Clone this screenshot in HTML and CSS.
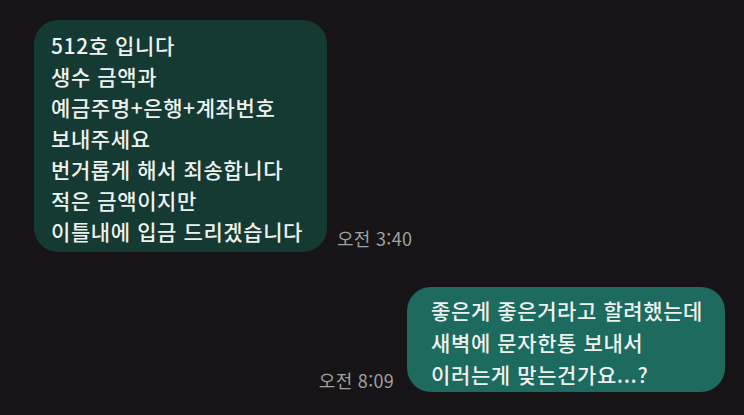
FILE: index.html
```html
<!DOCTYPE html>
<html lang="ko">
<head>
<meta charset="utf-8">
<link rel="stylesheet" href="styles.css">
</head>
<body>
<main class="chat">
  <div class="row row-in">
    <div class="bubble bubble-in">
      <p class="line">512호 입니다</p>
      <p class="line">생수 금액과</p>
      <p class="line">예금주명+은행+계좌번호</p>
      <p class="line">보내주세요</p>
      <p class="line">번거롭게 해서 죄송합니다</p>
      <p class="line">적은 금액이지만</p>
      <p class="line">이틀내에 입금 드리겠습니다</p>
    </div>
    <span class="time time-in">오전 3:40</span>
  </div>
  <div class="row row-out">
    <span class="time time-out">오전 8:09</span>
    <div class="bubble bubble-out">
      <p class="line">좋은게 좋은거라고 할려했는데</p>
      <p class="line">새벽에 문자한통 보내서</p>
      <p class="line">이러는게 맞는건가요...?</p>
    </div>
  </div>
</main>
</body>
</html>
```

FILE: styles.css
```css
html, body {
  margin: 0;
  padding: 0;
  background: #161416;
  width: 744px;
  height: 415px;
  overflow: hidden;
}
.chat {
  display: flex;
  flex-direction: column;
  gap: 35px;
  padding: 20px 19px 0 34px;
  font-family: "Noto Sans CJK KR", "Noto Sans", sans-serif;
}
.row {
  display: flex;
  align-items: flex-end;
}
.row-out {
  justify-content: flex-end;
}
.bubble {
  border-radius: 24px;
  color: #eef2ef;
  font-size: 21px;
  font-weight: 500;
  letter-spacing: 0.6px;
}
.bubble-in {
  background: #153a33;
  padding: 10px 24px 5px 17px;
  line-height: 31px;
}
.bubble-out {
  background: #1d6a5f;
  padding: 7px 22px 2px 24px;
  line-height: 32px;
}
.line {
  margin: 0;
  white-space: nowrap;
}
.time {
  color: #a0a0a0;
  font-size: 18px;
  letter-spacing: 0.3px;
  line-height: 20px;
}
.time-in {
  margin-left: 10px;
  margin-bottom: 4px;
}
.time-out {
  margin-right: 13px;
  margin-bottom: 2px;
}
```
